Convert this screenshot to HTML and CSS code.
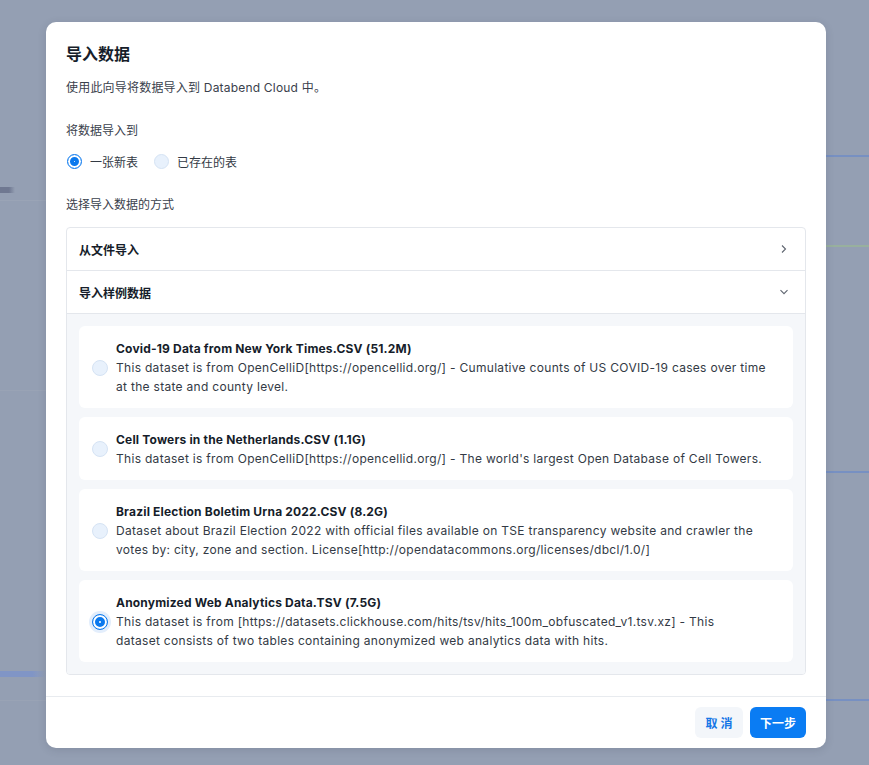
FILE: index.html
```html
<!DOCTYPE html>
<html lang="zh">
<head>
<meta charset="utf-8">
<title>导入数据</title>
<link rel="stylesheet" href="styles.css">
</head>
<body>
<div class="backdrop">
  <div class="modal">
    <div class="modal-body">
      <h1 class="title">导入数据</h1>
      <p class="subtitle">使用此向导将数据导入到 Databend Cloud 中。</p>
      <p class="label label-first">将数据导入到</p>
      <div class="radio-row">
        <label class="radio-opt"><span class="radio checked"></span><span>一张新表</span></label>
        <label class="radio-opt"><span class="radio"></span><span>已存在的表</span></label>
      </div>
      <p class="label label-second">选择导入数据的方式</p>
      <div class="accordion">
        <div class="acc-head">
          <span>从文件导入</span>
          <svg class="chev" width="10" height="10" viewBox="0 0 10 10"><path d="M3 1.5 L6.5 5 L3 8.5" fill="none" stroke="#5f6570" stroke-width="1.1"/></svg>
        </div>
        <div class="acc-head">
          <span>导入样例数据</span>
          <svg class="chev" width="10" height="10" viewBox="0 0 10 10"><path d="M1.5 3.2 L5 6.7 L8.5 3.2" fill="none" stroke="#5f6570" stroke-width="1.1"/></svg>
        </div>
        <div class="acc-content">
          <div class="card">
            <span class="radio"></span>
            <div class="card-text">
              <div class="card-title">Covid-19 Data from New York Times.CSV (51.2M)</div>
              <div class="card-desc">This dataset is from OpenCelliD[https://opencellid.org/] - Cumulative counts of US COVID-19 cases over time at the state and county level.</div>
            </div>
          </div>
          <div class="card">
            <span class="radio"></span>
            <div class="card-text">
              <div class="card-title">Cell Towers in the Netherlands.CSV (1.1G)</div>
              <div class="card-desc">This dataset is from OpenCelliD[https://opencellid.org/] - The world's largest Open Database of Cell Towers.</div>
            </div>
          </div>
          <div class="card">
            <span class="radio"></span>
            <div class="card-text">
              <div class="card-title">Brazil Election Boletim Urna 2022.CSV (8.2G)</div>
              <div class="card-desc">Dataset about Brazil Election 2022 with official files available on TSE transparency website and crawler the votes by: city, zone and section. License[http://opendatacommons.org/licenses/dbcl/1.0/]</div>
            </div>
          </div>
          <div class="card">
            <span class="radio checked halo"></span>
            <div class="card-text">
              <div class="card-title">Anonymized Web Analytics Data.TSV (7.5G)</div>
              <div class="card-desc">This dataset is from [https://datasets.clickhouse.com/hits/tsv/hits_100m_obfuscated_v1.tsv.xz] - This<br>dataset consists of two tables containing anonymized web analytics data with hits.</div>
            </div>
          </div>
        </div>
      </div>
    </div>
    <div class="modal-footer">
      <button class="btn btn-cancel">取 消</button>
      <button class="btn btn-primary">下一步</button>
    </div>
  </div>
</div>
</body>
</html>
```
FILE: styles.css
```css
* { box-sizing: border-box; }
html, body { margin: 0; padding: 0; }
body {
  width: 869px;
  height: 765px;
  overflow: hidden;
  font-family: Inter, "Noto Sans CJK SC", sans-serif;
  font-size: 12px;
  color: #333a45;
  background-color: #949fb3;
}
.backdrop {
  width: 869px;
  height: 765px;
  display: flex;
  justify-content: flex-start;
  align-items: flex-start;
  padding: 22px 0 0 46px;
  background-image:
    linear-gradient(to bottom,
      transparent 155px, #7790c2 155px, #7790c2 157px, transparent 157px,
      transparent 245px, #98b09e 245px, #98b09e 247px, transparent 247px,
      transparent 471px, #7790c2 471px, #7790c2 473px, transparent 473px,
      transparent 699px, #7790c2 699px, #7790c2 701px, transparent 701px),
    linear-gradient(to right, #6f7891 60%, rgba(148, 159, 179, 0)),
    linear-gradient(to right, #8095c6 70%, rgba(148, 159, 179, 0)),
    linear-gradient(to bottom,
      transparent 200px, #9aa4b6 200px, #9aa4b6 201px, transparent 201px,
      transparent 390px, #99a3b5 390px, #99a3b5 391px, transparent 391px,
      transparent 700px, #99a3b5 700px, #99a3b5 701px, transparent 701px);
  background-size: 43px 765px, 15px 6px, 46px 6px, 46px 765px;
  background-position: right top, 0 187px, 0 671px, left top;
  background-repeat: no-repeat;
}
.modal {
  width: 780px;
  height: 726px;
  background: #ffffff;
  border-radius: 10px;
  display: flex;
  flex-direction: column;
  box-shadow: 0 2px 8px rgba(40, 50, 70, 0.15);
}
.modal-body {
  flex: 1;
  padding: 20px 20px 21px;
}
.title {
  margin: 0;
  font-size: 16px;
  line-height: 24px;
  font-weight: 700;
  color: #161d2a;
}
.subtitle {
  margin: 13px 0 0;
  line-height: 18px;
  color: #3a414c;
  letter-spacing: 0.2px;
}
.label {
  margin: 0;
  line-height: 18px;
  color: #3a414c;
}
.label-first { margin-top: 25px; }
.label-second { margin-top: 25px; }
.radio-row {
  margin-top: 11px;
  height: 20px;
  display: flex;
  align-items: center;
  gap: 16px;
  padding-left: 1px;
}
.radio-opt {
  display: flex;
  align-items: center;
  gap: 8px;
  color: #333a45;
}
.radio {
  flex: none;
  width: 15px;
  height: 15px;
  border-radius: 50%;
  background: #e8f1fc;
  border: 1px solid #d5e3f4;
}
.radio.checked {
  background: #ffffff;
  border: 1.5px solid #0b79ee;
  box-shadow: inset 0 0 0 2px #ffffff, inset 0 0 0 6px #0b79ee;
}
.radio.halo {
  box-shadow: inset 0 0 0 2px #ffffff, inset 0 0 0 6px #0b79ee, 0 0 0 3px #e3eefc;
}
.accordion {
  margin-top: 13px;
  border: 1px solid #e4e7ec;
  border-radius: 4px;
  overflow: hidden;
}
.acc-head {
  height: 43px;
  display: flex;
  align-items: center;
  justify-content: space-between;
  padding: 0 16px 0 12px;
  border-bottom: 1px solid #e4e7ec;
  font-weight: 700;
  color: #161d2a;
}
.chev { display: block; }
.acc-content {
  background: #f5f7fa;
  padding: 12px;
  display: flex;
  flex-direction: column;
  gap: 9px;
}
.card {
  background: #ffffff;
  border-radius: 6px;
  padding: 13px 22px 12px 13px;
  display: flex;
  align-items: center;
  gap: 8px;
}
.card .radio {
  width: 16px;
  height: 16px;
}
.card-text { flex: 1; }
.card-title {
  font-weight: 700;
  line-height: 19px;
  color: #161d2a;
  letter-spacing: 0.18px;
}
.card-desc {
  line-height: 19px;
  color: #333a45;
  letter-spacing: 0.3px;
}
.modal-footer {
  border-top: 1px solid #e8ebef;
  padding: 10px 20px;
  display: flex;
  justify-content: flex-end;
  gap: 7px;
}
.btn {
  height: 31px;
  border: none;
  border-radius: 6px;
  font-family: Inter, "Noto Sans CJK SC", sans-serif;
  font-size: 12px;
  font-weight: 700;
  cursor: pointer;
}
.btn-cancel {
  width: 48px;
  background: #f3f6fa;
  color: #1677e6;
}
.btn-primary {
  width: 56px;
  background: #0a7cf3;
  color: #ffffff;
}
```
